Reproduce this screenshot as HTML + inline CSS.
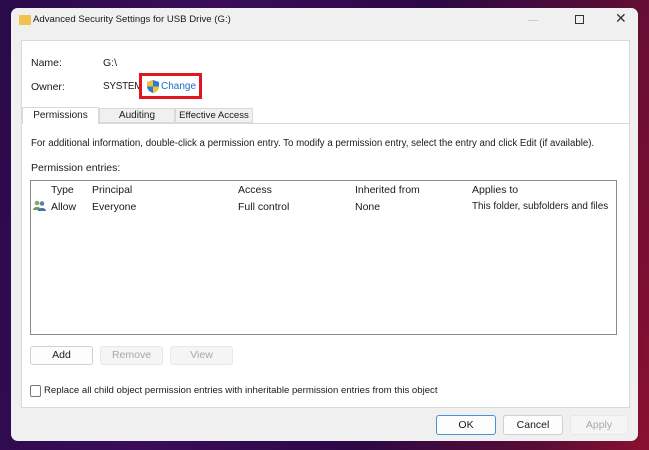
<!DOCTYPE html>
<html><head><meta charset="utf-8"><style>
*{margin:0;padding:0;box-sizing:border-box}
body{width:649px;height:450px;overflow:hidden;position:relative;font-family:"Liberation Sans",sans-serif;font-size:10px;color:#1a1a1a;
background:linear-gradient(100deg,#2a0a4a 0%,#3a0c5a 30%,#2c0845 60%,#5a0d35 85%,#8a1030 100%)}
.a{position:absolute;white-space:nowrap}
.win{position:absolute;left:11px;top:8px;width:627px;height:433px;background:#f0f0f0;border-radius:7px;overflow:hidden}
.title{position:absolute;left:0;top:0;width:627px;height:26px;background:#f0f0f0}
.panel{position:absolute;left:10px;top:32px;width:609px;height:368px;background:#fff;border:1px solid #d9d9d9}
.btn{position:absolute;height:19px;border:1px solid #d0d0d0;background:#fdfdfd;border-radius:3px;text-align:center;line-height:17px;font-size:10.5px}
.dis{background:#f5f5f5;border-color:#e8e8e8;color:#a8a8a8}
</style></head><body>
<div class="win">
 <div class="title">
  <div class="a" style="left:8px;top:7px;width:12px;height:10px;background:#f1c24c;border-radius:1px"></div>
  <div class="a" style="left:22px;top:6px;font-size:9.6px">Advanced Security Settings for USB Drive (G:)</div>
  <div class="a" style="left:517px;top:12px;width:10px;height:1px;background:#ccc"></div>
  <div class="a" style="left:564px;top:7px;width:9px;height:9px;border:1px solid #333"></div>
  <div class="a" style="left:604px;top:2px;font-size:14px;color:#333">✕</div>
 </div>
 <div class="panel"></div>
</div>
<div class="a" style="left:31px;top:57px;font-size:10.5px">Name:</div>
<div class="a" style="left:103px;top:57px;font-size:10.5px">G:\</div>
<div class="a" style="left:31px;top:81px;font-size:10.5px">Owner:</div>
<div class="a" style="left:103px;top:81px;font-size:10px;letter-spacing:-0.3px">SYSTEM</div>
<div class="a" style="left:139px;top:73px;width:63px;height:26px;border:3px solid #e0151f"></div>
<svg class="a" style="left:147px;top:80px" width="12" height="13" viewBox="0 0 12 13"><path d="M6 0L12 2V6C12 10 9 12 6 13C3 12 0 10 0 6V2Z" fill="#2a7bd5"/><path d="M6 0V6.5H0V2Z" fill="#f2c230"/><path d="M6 6.5H12C11.5 10 9 12 6 13Z" fill="#f2c230"/></svg>
<div class="a" style="left:161px;top:81px;color:#1d6bc0;font-size:10px">Change</div>
<!-- tabs -->
<div class="a" style="left:21px;top:123px;width:609px;height:1px;background:#d9d9d9"></div>
<div class="a" style="left:22px;top:107px;width:77px;height:17px;background:#fff;border:1px solid #d9d9d9;border-bottom:none;text-align:center;line-height:15px;font-size:10px">Permissions</div>
<div class="a" style="left:99px;top:108px;width:76px;height:15px;background:#f0f0f0;border:1px solid #d9d9d9;text-align:center;line-height:14px;font-size:10px">Auditing</div>
<div class="a" style="left:175px;top:108px;width:78px;height:15px;background:#f0f0f0;border:1px solid #d9d9d9;text-align:center;line-height:14px;font-size:9.6px">Effective Access</div>
<div class="a" style="left:31px;top:138px;font-size:9.7px">For additional information, double-click a permission entry. To modify a permission entry, select the entry and click Edit (if available).</div>
<div class="a" style="left:31px;top:162px;font-size:10.5px">Permission entries:</div>
<div class="a" style="left:30px;top:180px;width:587px;height:155px;border:1px solid #8a8a8a;background:#fff"></div>
<div class="a" style="left:51px;top:184px;font-size:10.5px">Type</div>
<div class="a" style="left:92px;top:184px;font-size:10.5px">Principal</div>
<div class="a" style="left:238px;top:184px;font-size:10.5px">Access</div>
<div class="a" style="left:355px;top:184px;font-size:10.5px">Inherited from</div>
<div class="a" style="left:472px;top:184px;font-size:10.5px">Applies to</div>
<svg class="a" style="left:33px;top:200px" width="13" height="11" viewBox="0 0 13 11"><circle cx="4" cy="3" r="2.3" fill="#8aa86a"/><path d="M0 10C0 6 8 6 8 10Z" fill="#6b9a5a"/><circle cx="9" cy="3.5" r="2.3" fill="#5a7fb8"/><path d="M5 11C5 7 13 7 13 11Z" fill="#4a6fa8"/></svg>
<div class="a" style="left:51px;top:201px;font-size:10.5px">Allow</div>
<div class="a" style="left:92px;top:201px;font-size:10.5px">Everyone</div>
<div class="a" style="left:238px;top:201px;font-size:10.5px">Full control</div>
<div class="a" style="left:355px;top:201px;font-size:10.5px">None</div>
<div class="a" style="left:472px;top:201px;font-size:9.9px">This folder, subfolders and files</div>
<div class="btn" style="left:30px;top:346px;width:63px">Add</div>
<div class="btn dis" style="left:100px;top:346px;width:63px">Remove</div>
<div class="btn dis" style="left:170px;top:346px;width:63px">View</div>
<div class="a" style="left:30px;top:385px;width:11px;height:12px;border:1px solid #777;border-radius:2px;background:#fff"></div>
<div class="a" style="left:44px;top:385px;font-size:9.6px">Replace all child object permission entries with inheritable permission entries from this object</div>
<div class="btn" style="left:436px;top:415px;width:60px;border-color:#4a90d9;height:20px;line-height:18px">OK</div>
<div class="btn" style="left:503px;top:415px;width:60px;height:20px;line-height:18px">Cancel</div>
<div class="btn dis" style="left:570px;top:415px;width:58px;height:20px;line-height:18px">Apply</div>
</body></html>
